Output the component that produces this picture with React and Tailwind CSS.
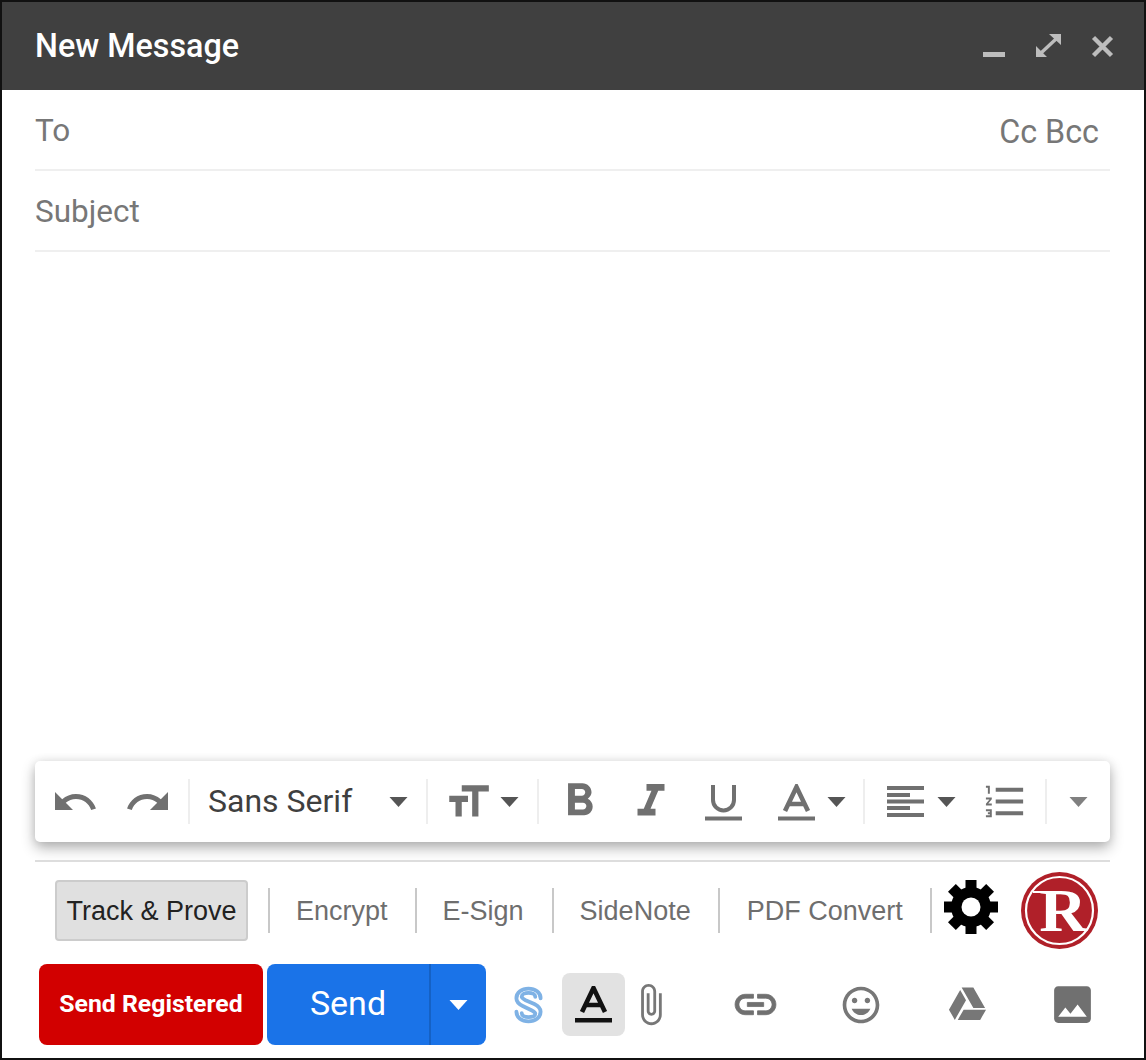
const Caret = ({ className = 'fill-[#555]', w = 19, h = 10 }) => (
  <svg width={w} height={h} viewBox="0 0 18 10" className={className}>
    <path d="M0 0h18L9 10z" />
  </svg>
)

const Sep = ({ className = '' }) => <div className={`w-[2px] h-[45px] bg-[#eee] ${className}`} />

const Icon = ({ size, d, className = 'fill-[#707070]', vb = '0 0 24 24' }) => (
  <svg width={size} height={size} viewBox={vb} className={className}>
    <path d={d} />
  </svg>
)

const Tab = ({ children, className = '' }) => (
  <span className={`mt-[1px] text-[27px] leading-none text-[#6e6e6e] ${className}`}>{children}</span>
)

const TabSep = ({ className = '' }) => <div className={`w-[2px] h-[45px] bg-[#c8c8c8] ${className}`} />

export default function App() {
  return (
    <div className="w-[1146px] h-[1060px] border-2 border-[#111] bg-white flex flex-col font-['Roboto',sans-serif] overflow-hidden">
      {/* Header */}
      <div className="h-[88px] shrink-0 bg-[#404040] flex items-center pl-[33px]">
        <span className="text-[32.3px] font-medium text-white leading-none">New Message</span>
        <div className="ml-auto flex items-center">
          <div className="w-[22px] h-[5px] mt-[17px] bg-[#bdbdbd]" />
          <svg width="25" height="24" viewBox="0 0 25 24" className="ml-[31px]">
            <path d="M13 0h12v11zM0 12l11 11H0z" fill="#bdbdbd" />
            <path d="M5 19L20 5" stroke="#bdbdbd" strokeWidth="3.4" />
          </svg>
          <svg width="23" height="23" viewBox="0 0 23 23" className="ml-[30px] mr-[30px]">
            <path d="M2.5 2.5l18 18M20.5 2.5l-18 18" stroke="#bdbdbd" strokeWidth="4.4" />
          </svg>
        </div>
      </div>

      {/* Fields */}
      <div className="ml-[33px] mr-[34px] h-[81px] shrink-0 border-b-2 border-[#efefef] flex items-center justify-between text-[31.5px] text-[#777] leading-none">
        <span className="mt-[3px]">To</span>
        <span className="mr-[11px] mt-[5px] text-[32.3px]">Cc Bcc</span>
      </div>
      <div className="ml-[33px] mr-[34px] h-[81px] shrink-0 border-b-2 border-[#efefef] flex items-center text-[31.5px] text-[#777] leading-none">
        <span className="mt-[3px]">Subject</span>
      </div>

      <div className="flex-1" />

      {/* Formatting toolbar */}
      <div className="ml-[33px] mr-[34px] h-[81px] shrink-0 rounded-[5px] bg-white shadow-[0_6px_14px_rgba(0,0,0,0.3),0_0_10px_rgba(0,0,0,0.08)] flex items-center">
        <Icon size={48} className="fill-[#707070] ml-[16px]" d="M12.5 8c-2.65 0-5.05.99-6.9 2.6L2 7v9h9l-3.62-3.62c1.39-1.16 3.16-1.88 5.12-1.88 3.54 0 6.55 2.31 7.6 5.5l2.37-.78C21.08 11.03 17.15 8 12.5 8z" />
        <Icon size={48} className="fill-[#707070] ml-[25px] -scale-x-100" d="M12.5 8c-2.65 0-5.05.99-6.9 2.6L2 7v9h9l-3.62-3.62c1.39-1.16 3.16-1.88 5.12-1.88 3.54 0 6.55 2.31 7.6 5.5l2.37-.78C21.08 11.03 17.15 8 12.5 8z" />
        <Sep className="ml-[16px]" />
        <span className="ml-[18px] mb-[2px] w-[181px] text-[32px] leading-none text-[#3f3f3f]">Sans Serif</span>
        <Caret />
        <Sep className="ml-[18px]" />
        <Icon size={50} className="fill-[#707070] ml-[15px]" d="M9 4v3h5v12h3V7h5V4H9zm-6 8h3v7h3v-7h3V9H3v3z" />
        <Caret className="fill-[#555] ml-[7px]" />
        <Sep className="ml-[18px]" />
        <Icon size={55} className="fill-[#707070] ml-[13px]" d="M15.6 10.79c.97-.67 1.65-1.77 1.65-2.79 0-2.26-1.75-4-4-4H7v14h7.04c2.09 0 3.71-1.7 3.71-3.79 0-1.52-.86-2.82-2.15-3.42zM10 6.5h3c.83 0 1.5.67 1.5 1.5s-.67 1.5-1.5 1.5h-3v-3zm3.5 9H10v-3h3.5c.83 0 1.5.67 1.5 1.5s-.67 1.5-1.5 1.5z" />
        <Icon size={54} className="fill-[#707070] ml-[17px]" d="M10 4v3h2.21l-3.42 8H6v3h8v-3h-2.21l3.42-8H18V4z" />
        <svg width="37" height="37" viewBox="0 0 37 37" className="ml-[27px] mt-[1px]">
          <path d="M8 1v15a10.5 10.5 0 0 0 21 0V1" fill="none" stroke="#707070" strokeWidth="4" />
          <rect y="32.5" width="37" height="4" fill="#707070" />
        </svg>
        <svg width="37" height="37" viewBox="0 0 37 37" className="ml-[36px] mt-[1px]">
          <path d="M7 27L18.500 3L30 27M10 20h17" fill="none" stroke="#707070" strokeWidth="4.600" />
          <rect y="32.5" width="37" height="4" fill="#707070" />
        </svg>
        <Caret className="fill-[#555] ml-[12px]" />
        <Sep className="ml-[17px]" />
        <svg width="37" height="31" viewBox="0 0 37 31" className="ml-[22px]">
          <path d="M0 0h37v4H0zM0 7h23v4H0zM0 13.500h37v4H0zM0 20h23v4H0zM0 27h37v4H0z" fill="#707070" />
        </svg>
        <Caret className="fill-[#555] ml-[13px]" />
        <Icon size={47} className="fill-[#707070] ml-[26px]" d="M2 17h2v.5H3v1h1v.5H2v1h3v-4H2v1zm1-9h1V4H2v1h1v3zm-1 3h1.800L2 13.100v.9h3v-1H3.200L5 10.900V10H2v1zm5-6v2h14V5H7zm0 14h14v-2H7v2zm0-6h14v-2H7v2z" />
        <Sep className="ml-[16px]" />
        <Caret className="fill-[#808080] ml-[22px]" />
      </div>

      <div className="ml-[33px] mr-[34px] mt-[18px] h-[2px] shrink-0 bg-[#ddd]" />

      {/* Add-on tabs */}
      <div className="h-[79px] shrink-0 pt-[18px] pl-[53px] flex items-start">
        <div className="w-[193px] h-[61px] rounded-[4px] border-2 border-[#ccc] bg-[#e0e0e0] flex items-center justify-center">
          <span className="mt-[1px] font-['Liberation_Sans',sans-serif] text-[27px] leading-none text-[#222]">Track &amp; Prove</span>
        </div>
        <div className="h-[61px] flex items-center font-['Liberation_Sans',sans-serif]">
          <TabSep className="ml-[20px]" />
          <Tab className="ml-[26px]">Encrypt</Tab>
          <TabSep className="ml-[27px]" />
          <Tab className="ml-[26px]">E-Sign</Tab>
          <TabSep className="ml-[28px]" />
          <Tab className="ml-[26px]">SideNote</Tab>
          <TabSep className="ml-[27px]" />
          <Tab className="ml-[27px]">PDF Convert</Tab>
          <TabSep className="ml-[27px]" />
          <svg width="54" height="54" viewBox="0 0 54 54" className="ml-[12px] mb-[7px]">
            <circle cx="27" cy="27" r="14.500" fill="none" stroke="#000" strokeWidth="11" />
            <g fill="#000">
              <rect x="21.500" width="11" height="54" />
              <rect x="21.500" width="11" height="54" transform="rotate(45 27 27)" />
              <rect x="21.500" width="11" height="54" transform="rotate(90 27 27)" />
              <rect x="21.500" width="11" height="54" transform="rotate(135 27 27)" />
            </g>
            <circle cx="27" cy="27" r="9.500" fill="#fff" />
          </svg>
          <svg width="77" height="77" viewBox="0 0 77 77" className="ml-[23px] mb-[1px]">
            <circle cx="38.500" cy="38.500" r="38.500" fill="#b02029" />
            <circle cx="38.500" cy="38.500" r="33.500" fill="none" stroke="#fff" strokeWidth="2.200" />
            <rect x="12" y="19" width="16" height="2" fill="#fff" />
            <text transform="translate(42 59) scale(1.08 1)" textAnchor="middle" fontSize="61" fontWeight="700" fill="#fff" fontFamily="'Liberation Serif', serif">R</text>
          </svg>
        </div>
      </div>

      {/* Send row */}
      <div className="h-[81px] shrink-0 mt-[23px] mb-[13px] pl-[37px] flex items-center">
        <div className="w-[224px] h-[81px] rounded-[8px] bg-[#d20000] flex items-center justify-center">
          <span className="text-[24.8px] font-bold text-white leading-none">Send Registered</span>
        </div>
        <div className="ml-[4px] w-[219px] h-[81px] rounded-[8px] bg-[#1a73e8] flex">
          <div className="w-[164px] flex items-center justify-center border-r-2 border-[#1561c4]">
            <span className="mb-[3px] text-[34px] text-white leading-none">Send</span>
          </div>
          <div className="flex-1 flex items-center justify-center">
            <Caret className="fill-white" />
          </div>
        </div>
        <svg width="29" height="38" viewBox="0 0 30 38" className="ml-[28px]" fill="none" stroke="#7fb2e5" strokeWidth="4" strokeLinecap="round">
          <path d="M27.500 12C27.500 6 22 2 15 2C8 2 2.500 6 2.500 12C2.500 16 5 18 9 20L18 24.500C20.500 25.800 22 27 22 28C22 30.500 19 31.500 15 31.500C11 31.500 8 30 8 27.500" />
          <path d="M22 10.500C22 8 19 6.500 15 6.500C11 6.500 8 8 8 10.500C8 11.500 9.500 12.700 12 14L21 18C25 20 27.500 22 27.500 26C27.500 32 22 36 15 36C8 36 2.500 32 2.500 26" />
        </svg>
        <div className="ml-[19px] w-[63px] h-[63px] rounded-[8px] bg-[#e2e2e2] flex items-center justify-center">
          <svg width="37" height="37" viewBox="0 0 37 37">
            <path d="M7 26L18.500 2L30 26M10 19h17" fill="none" stroke="#111" strokeWidth="4.600" />
            <rect y="32" width="37" height="4.500" fill="#111" />
          </svg>
        </div>
        <Icon size={45} className="fill-[#777] ml-[3px]" d="M16.500 6v11.500c0 2.210-1.790 4-4 4s-4-1.790-4-4V5c0-1.380 1.120-2.500 2.500-2.500s2.500 1.120 2.500 2.500v10.500c0 .55-.45 1-1 1s-1-.45-1-1V6H10v9.500c0 1.380 1.120 2.500 2.500 2.500s2.500-1.120 2.500-2.500V5c0-2.210-1.790-4-4-4S7 2.790 7 5v12.500c0 3.040 2.460 5.500 5.500 5.500s5.500-2.460 5.500-5.500V6h-1.500z" />
        <svg width="49" height="49" viewBox="0 0 24 24" className="fill-[#707070] stroke-[#707070] stroke-[0.4] ml-[58px]">
          <path d="M3.900 12c0-1.710 1.390-3.100 3.100-3.100h4V7H7c-2.760 0-5 2.240-5 5s2.240 5 5 5h4v-1.900H7c-1.710 0-3.100-1.390-3.100-3.100zM8 13h8v-2H8v2zm9-6h-4v1.900h4c1.710 0 3.100 1.390 3.100 3.100s-1.390 3.100-3.100 3.100h-4V17h4c2.760 0 5-2.240 5-5s-2.240-5-5-5z" />
        </svg>
        <Icon size={44} className="fill-[#777] ml-[59px]" d="M11.990 2C6.470 2 2 6.480 2 12s4.470 10 9.990 10C17.520 22 22 17.520 22 12S17.520 2 11.990 2zM12 20c-4.420 0-8-3.580-8-8s3.580-8 8-8 8 3.580 8 8-3.580 8-8 8zm3.500-9c.83 0 1.500-.67 1.500-1.500S16.330 8 15.500 8 14 8.670 14 9.500s.67 1.500 1.500 1.500zm-7 0c.83 0 1.500-.67 1.500-1.500S9.330 8 8.500 8 7 8.670 7 9.500 7.670 11 8.500 11zm3.500 6.500c2.330 0 4.310-1.460 5.110-3.500H6.890c.8 2.040 2.780 3.500 5.110 3.500z" />
        <Icon size={41} className="fill-[#777] ml-[64px]" d="M7.710 3.500L1.150 15L4.580 21L11.130 9.500M9.730 15L6.300 21H19.420L22.850 15M22.280 14L15.420 2H8.580L8.570 2L15.430 14H22.280Z" />
        <Icon size={49} className="fill-[#707070] ml-[60px]" d="M21 19V5c0-1.100-.9-2-2-2H5c-1.100 0-2 .9-2 2v14c0 1.100.9 2 2 2h14c1.100 0 2-.9 2-2zM8.500 13.500l2.500 3.010L14.500 12l4.500 6H5l3.500-4.500z" />
      </div>
    </div>
  )
}
